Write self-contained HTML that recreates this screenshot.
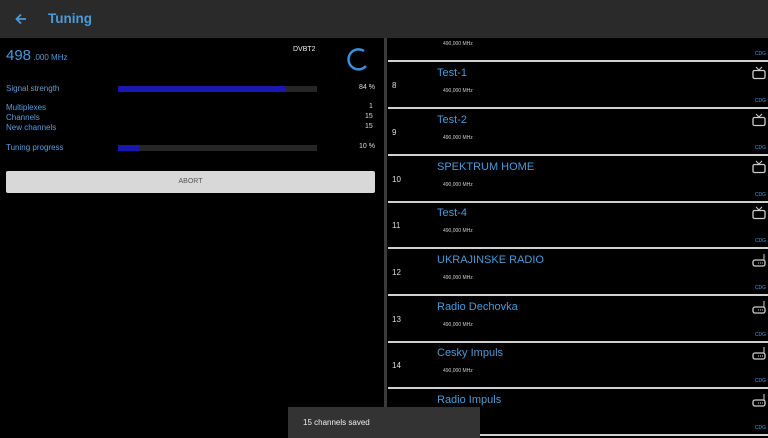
<!DOCTYPE html><html><head><style>
*{margin:0;padding:0;box-sizing:border-box}
body{width:768px;height:438px;background:#000;font-family:"Liberation Sans",sans-serif;position:relative;overflow:hidden;color:#ddd}
.a{position:absolute;white-space:nowrap}
.hdr{left:0;top:0;width:768px;height:38px;background:#2b2a2b}
.bl{color:#4a9ad8}
.lab{font-size:8px;color:#5a9ee0}
.bar{height:6px;background:#262626}
.row{position:absolute;left:388px;width:380px;height:47px;border-bottom:2px solid #d0d0d0}
.row .n{position:absolute;left:4px;top:19px;font-size:8px;color:#ddd}
.row .t{position:absolute;left:49px;top:5px;font-size:11px;color:#4a9ad8}
.row .f{position:absolute;left:55px;top:26px;font-size:5px;color:#ccc}
.row .c{position:absolute;right:2px;top:36px;font-size:5px;color:#4a9ad8}
.row svg{position:absolute;right:2px;top:4px}
</style></head><body>
<div class="a hdr"></div>
<svg class="a" style="left:14px;top:12px" width="14" height="14" viewBox="0 0 14 14"><path d="M12 7H3M7 2.5L2.5 7 7 11.5" stroke="#4a9ad8" stroke-width="1.8" fill="none"/></svg>
<div class="a bl" style="left:48px;top:11px;font-size:13.5px;font-weight:bold">Tuning</div>
<div class="a bl" style="left:6px;top:47px;font-size:15px">498<span style="font-size:8px"> .000 MHz</span></div>
<div class="a" style="left:293px;top:46px;font-size:7px;color:#eee">DVBT2</div>
<svg class="a" style="left:344px;top:45px" width="28" height="28"><path d="M20 6 A10 10 0 1 0 22 21" stroke="#3a8ed8" stroke-width="2.5" fill="none"/></svg>
<div class="a lab" style="left:6px;top:84px">Signal strength</div>
<div class="a bar" style="left:118px;top:86px;width:199px"><div style="width:167px;height:100%;background:#1818b0"></div></div>
<div class="a" style="left:359px;top:84px;font-size:7px">84 %</div>
<div class="a lab" style="left:6px;top:103px">Multiplexes</div>
<div class="a lab" style="left:6px;top:113px">Channels</div>
<div class="a lab" style="left:6px;top:123px">New channels</div>
<div class="a" style="left:369px;top:103px;font-size:7px">1</div>
<div class="a" style="left:365px;top:113px;font-size:7px">15</div>
<div class="a" style="left:365px;top:123px;font-size:7px">15</div>
<div class="a lab" style="left:6px;top:143px">Tuning progress</div>
<div class="a bar" style="left:118px;top:145px;width:199px"><div style="width:21px;height:100%;background:#1818b0"></div></div>
<div class="a" style="left:359px;top:143px;font-size:7px">10 %</div>
<div class="a" style="left:6px;top:171px;width:369px;height:22px;background:#d8d8d8;border-radius:2px;color:#555;font-size:7px;text-align:center;line-height:22px">ABORT</div>
<div class="a" style="left:384px;top:38px;width:3px;height:400px;background:#3a3a3a"></div>
<div class="row" style="top:15px"><div class="f">490,000 MHz</div><div class="c">CDG</div></div>
<div class="row" style="top:62px"><div class="n">8</div><div class="t">Test-1</div><div class="f">490,000 MHz</div><div class="c">CDG</div><svg width="14" height="14"><path d="M4 1l3 3 3-3" stroke="#ccc" fill="none"/><rect x="1" y="4.5" width="12" height="8" rx="1.5" stroke="#ccc" fill="none" stroke-width="1.3"/></svg></div>
<div class="row" style="top:109px"><div class="n">9</div><div class="t">Test-2</div><div class="f">490,000 MHz</div><div class="c">CDG</div><svg width="14" height="14"><path d="M4 1l3 3 3-3" stroke="#ccc" fill="none"/><rect x="1" y="4.5" width="12" height="8" rx="1.5" stroke="#ccc" fill="none" stroke-width="1.3"/></svg></div>
<div class="row" style="top:156px"><div class="n">10</div><div class="t">SPEKTRUM HOME</div><div class="f">490,000 MHz</div><div class="c">CDG</div><svg width="14" height="14"><path d="M4 1l3 3 3-3" stroke="#ccc" fill="none"/><rect x="1" y="4.5" width="12" height="8" rx="1.5" stroke="#ccc" fill="none" stroke-width="1.3"/></svg></div>
<div class="row" style="top:202px"><div class="n">11</div><div class="t">Test-4</div><div class="f">490,000 MHz</div><div class="c">CDG</div><svg width="14" height="14"><path d="M4 1l3 3 3-3" stroke="#ccc" fill="none"/><rect x="1" y="4.5" width="12" height="8" rx="1.5" stroke="#ccc" fill="none" stroke-width="1.3"/></svg></div>
<div class="row" style="top:249px"><div class="n">12</div><div class="t">UKRAJINSKE RADIO</div><div class="f">490,000 MHz</div><div class="c">CDG</div><svg width="14" height="14"><path d="M12 1v6" stroke="#ccc"/><rect x="1" y="7" width="12" height="6" rx="2" stroke="#ccc" fill="none" stroke-width="1.3"/><path d="M6 10h5" stroke="#ccc" stroke-dasharray="1 1"/></svg></div>
<div class="row" style="top:296px"><div class="n">13</div><div class="t">Radio Dechovka</div><div class="f">490,000 MHz</div><div class="c">CDG</div><svg width="14" height="14"><path d="M12 1v6" stroke="#ccc"/><rect x="1" y="7" width="12" height="6" rx="2" stroke="#ccc" fill="none" stroke-width="1.3"/><path d="M6 10h5" stroke="#ccc" stroke-dasharray="1 1"/></svg></div>
<div class="row" style="top:342px"><div class="n">14</div><div class="t">Cesky Impuls</div><div class="f">490,000 MHz</div><div class="c">CDG</div><svg width="14" height="14"><path d="M12 1v6" stroke="#ccc"/><rect x="1" y="7" width="12" height="6" rx="2" stroke="#ccc" fill="none" stroke-width="1.3"/><path d="M6 10h5" stroke="#ccc" stroke-dasharray="1 1"/></svg></div>
<div class="row" style="top:389px"><div class="t">Radio Impuls</div><div class="c">CDG</div><svg width="14" height="14"><path d="M12 1v6" stroke="#ccc"/><rect x="1" y="7" width="12" height="6" rx="2" stroke="#ccc" fill="none" stroke-width="1.3"/><path d="M6 10h5" stroke="#ccc" stroke-dasharray="1 1"/></svg></div>
<div class="a" style="left:288px;top:407px;width:192px;height:31px;background:#333;color:#eee;font-size:8px;line-height:31px;padding-left:15px">15 channels saved</div>
</body></html>
